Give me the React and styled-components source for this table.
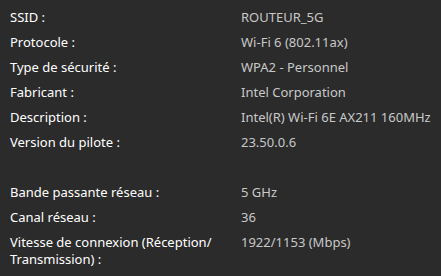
import React from 'react';
import styled, { createGlobalStyle } from 'styled-components';

const GlobalStyle = createGlobalStyle`
  html, body {
    margin: 0;
    padding: 0;
    background: #2b2b2b;
  }
`

const Panel = styled.div`
  width: 441px;
  height: 276px;
  box-sizing: border-box;
  padding: 9px 10px 0 10px;
  background: #2b2b2b;
  font-family: "Noto Sans", "Open Sans", sans-serif;
  font-size: 13px;
  line-height: 17px;
  overflow: hidden;
`

const Grid = styled.dl`
  display: grid;
  grid-template-columns: 221px 1fr;
  column-gap: 10px;
  row-gap: 8px;
  margin: 0;
`

const Label = styled.dt`
  margin: 0;
  color: #ffffff;
`

const Value = styled.dd`
  margin: 0;
  color: #c8c8c8;
  white-space: nowrap;
`

const Spacer = styled.div`
  grid-column: 1 / -1;
  height: 17px;
`

const groups = [
  [
    ['SSID :', 'ROUTEUR_5G'],
    ['Protocole :', 'Wi-Fi 6 (802.11ax)'],
    ['Type de sécurité :', 'WPA2 - Personnel'],
    ['Fabricant :', 'Intel Corporation'],
    ['Description :', 'Intel(R) Wi-Fi 6E AX211 160MHz'],
    ['Version du pilote :', '23.50.0.6'],
  ],
  [
    ['Bande passante réseau :', '5 GHz'],
    ['Canal réseau :', '36'],
    ['Vitesse de connexion (Réception/ Transmission) :', '1922/1153 (Mbps)'],
  ],
]

const App = () => {
  return (
    <>
      <GlobalStyle />
      <Panel>
        <Grid>
          {groups.map((rows, g) => (
            <React.Fragment key={g}>
              {g > 0 && <Spacer />}
              {rows.map(([label, value]) => (
                <React.Fragment key={label}>
                  <Label>{label}</Label>
                  <Value>{value}</Value>
                </React.Fragment>
              ))}
            </React.Fragment>
          ))}
        </Grid>
      </Panel>
    </>
  )
}

export default App;
